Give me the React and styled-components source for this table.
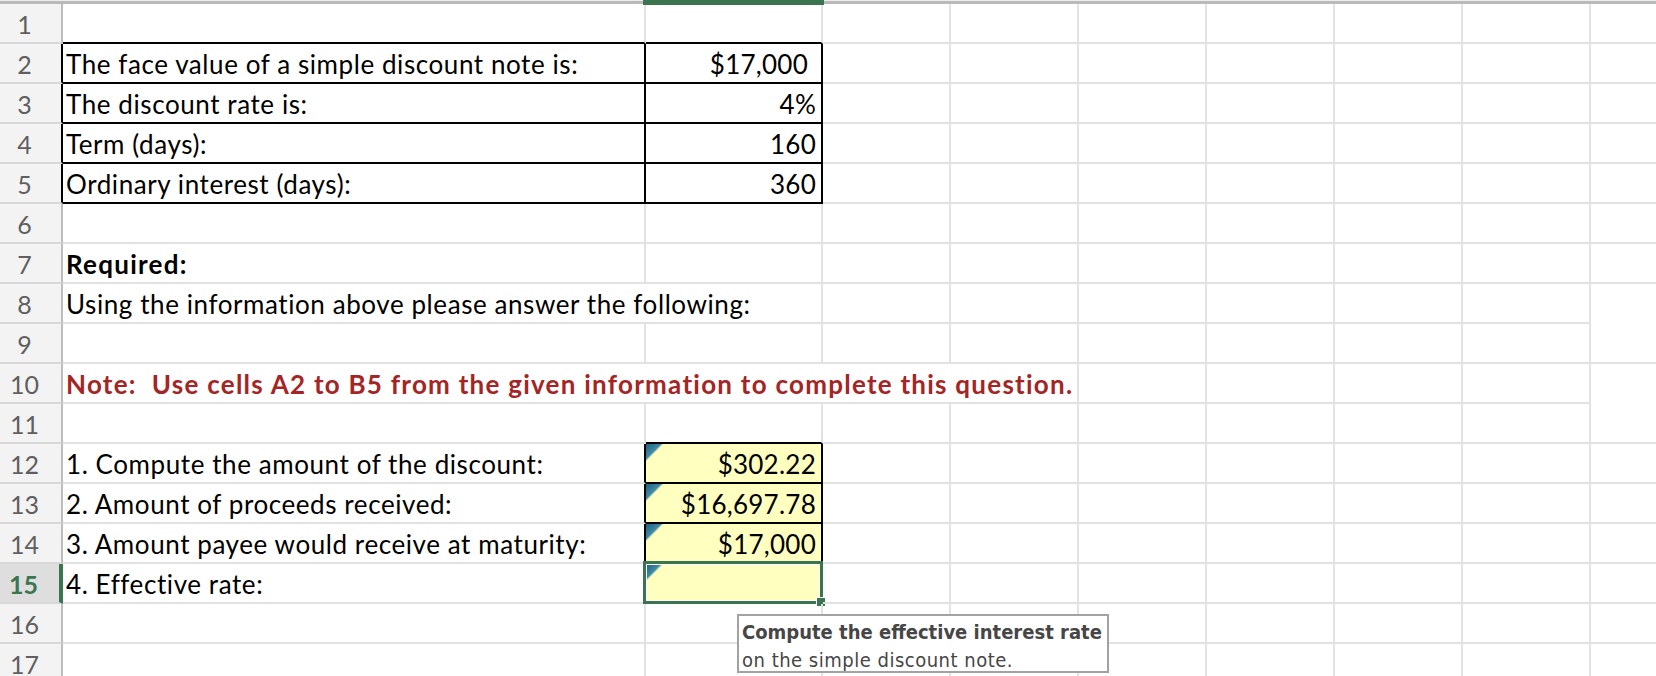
import React from "react";
import styled, { createGlobalStyle } from "styled-components";

const GRID = "#e2e2e2";
const HEAD_LINE = "#d8d8d8";
const HEAD_EDGE = "#bcbcbc";
const INK = "#000";
const GREEN = "#3a7550";
const YELLOW = "#ffffc0";
const RED = "#a52424";

const COLS = "63px 583px 177px repeat(7, 128px)";

const GlobalStyle = createGlobalStyle`
  html, body {
    margin: 0;
    padding: 0;
    background: #fff;
  }
`;

const Sheet = styled.div`
  position: relative;
  width: 1656px;
  height: 676px;
  overflow: hidden;
  background: #fff;
  font-family: Lato, "Open Sans", sans-serif;
  color: #000;
`;

const TopStrip = styled.div`
  display: grid;
  grid-template-columns: ${COLS};
  height: 4px;
  box-sizing: border-box;
  border-top: 1px solid #ececec;
  background: #bababa;
`;

const ColMark = styled.div`
  grid-column: 3;
  margin: -1px -1px 0 -3px;
  height: 5px;
  background: ${GREEN};
  position: relative;
  z-index: 2;
`;

const Row = styled.div`
  display: grid;
  grid-template-columns: ${COLS};
  height: 40px;
`;

const RowHead = styled.div`
  box-sizing: border-box;
  background: ${(p) => (p.$active ? "#dedede" : "#f3f3f3")};
  border-right: ${(p) => (p.$active ? 4 : 2)}px solid ${(p) => p.$edge};
  border-bottom: 2px solid ${HEAD_LINE};
  color: ${(p) => (p.$active ? GREEN : "#5f5f5f")};
  font-weight: ${(p) => (p.$active ? 700 : 400)};
  font-size: 25px;
  line-height: 36px;
  padding: 2px 12px 0 0;
  text-align: center;
`;

const Cell = styled.div`
  position: relative;
  box-sizing: border-box;
  grid-column: span ${(p) => p.$span || 1};
  border-right: 2px solid ${(p) => p.$r || GRID};
  border-bottom: 2px solid ${(p) => p.$b || GRID};
  background-color: ${(p) => p.$fill || "transparent"};
  background-image: ${(p) =>
    p.$note
      ? "linear-gradient(135deg, #225f7b 0px, #3e8ba7 10.5px, rgba(255,255,192,0) 12.5px)"
      : "none"};
  background-size: 17px 17px;
  background-repeat: no-repeat;
  font-size: 26px;
  letter-spacing: ${(p) => (p.$bold ? 1.25 : p.$right ? 0.25 : 0.58)}px;
  line-height: 36px;
  padding: 2px ${(p) => (p.$acct ? 13 : 5)}px 0 3px;
  text-align: ${(p) => (p.$right ? "right" : "left")};
  font-weight: ${(p) => (p.$bold ? 700 : 400)};
  color: ${(p) => p.$color || "#000"};
  white-space: pre;
`;

const Selection = styled.div`
  position: absolute;
  top: -3px;
  left: -3px;
  right: -2px;
  bottom: -2px;
  border: 3px solid ${GREEN};
  box-shadow: inset 0 0 0 1px #fff;
  pointer-events: none;
`;

const FillHandle = styled.div`
  position: absolute;
  right: -6px;
  bottom: -6px;
  width: 8px;
  height: 8px;
  background: ${GREEN};
  border: 1px solid #fff;
`;

const Tip = styled.div`
  position: absolute;
  left: 737px;
  top: 614px;
  width: 372px;
  height: 59px;
  box-sizing: border-box;
  border: 2px solid #a2a2a2;
  background: #fff;
  color: #464646;
  font-family: "DejaVu Sans Condensed", "DejaVu Sans", sans-serif;
  font-size: 20px;
  line-height: 28px;
  padding: 2px 0 0 3px;
  white-space: nowrap;
  overflow: hidden;
`;

const TipTitle = styled.div`
  font-weight: 700;
`;

const TipBody = styled.div`
  letter-spacing: 0.5px;
`;

const rows = [
  { n: 1 },
  { n: 2, a: "The face value of a simple discount note is:", b: "$17,000", acct: true },
  { n: 3, a: "The discount rate is:", b: "4%" },
  { n: 4, a: "Term (days):", b: "160" },
  { n: 5, a: "Ordinary interest (days):", b: "360" },
  { n: 6 },
  { n: 7, a: "Required:", bold: true },
  { n: 8, a: "Using the information above please answer the following:", span: 2 },
  { n: 9 },
  {
    n: 10,
    a: "Note:  Use cells A2 to B5 from the given information to complete this question.",
    bold: true,
    color: RED,
    span: 4,
  },
  { n: 11 },
  { n: 12, a: "1. Compute the amount of the discount:", b: "$302.22", answer: true },
  { n: 13, a: "2. Amount of proceeds received:", b: "$16,697.78", answer: true },
  { n: 14, a: "3. Amount payee would receive at maturity:", b: "$17,000", answer: true },
  { n: 15, a: "4. Effective rate:", b: "", answer: true, active: true },
  { n: 16 },
  { n: 17 },
];

const boxedGiven = (n) => n >= 2 && n <= 5;
const boxedAnswer = (n) => n >= 12 && n <= 14;

function SheetRow({ row }) {
  const { n } = row;
  const edge = row.active ? GREEN : boxedGiven(n) ? INK : HEAD_EDGE;
  const span = row.span || 1;

  const aRight = boxedGiven(n) || boxedAnswer(n) ? INK : undefined;
  const aBottom = boxedGiven(n) || n === 1 ? INK : undefined;
  const bRight = boxedGiven(n) || boxedAnswer(n) ? INK : undefined;
  const bBottom = boxedGiven(n) || boxedAnswer(n) || n === 1 || n === 11 ? INK : undefined;

  const rest = 8 - span;

  return (
    <Row>
      <RowHead $edge={edge} $active={row.active}>
        {n}
      </RowHead>
      <Cell
        $span={span}
        $r={aRight}
        $b={aBottom}
        $bold={row.bold}
        $color={row.color}
      >
        {row.a || ""}
      </Cell>
      {span === 1 && (
        <Cell
          $right
          $acct={row.acct}
          $r={bRight}
          $b={bBottom}
          $fill={row.answer ? YELLOW : undefined}
          $note={row.answer}
        >
          {row.b || ""}
          {row.active && (
            <Selection>
              <FillHandle />
            </Selection>
          )}
        </Cell>
      )}
      {Array.from({ length: rest }).map((_, i) => (
        <Cell key={i} />
      ))}
    </Row>
  );
}

export default function App() {
  return (
    <>
      <GlobalStyle />
      <Sheet>
        <TopStrip>
          <ColMark />
        </TopStrip>
        {rows.map((row) => (
          <SheetRow key={row.n} row={row} />
        ))}
        <Tip>
          <TipTitle>Compute the effective interest rate</TipTitle>
          <TipBody>on the simple discount note.</TipBody>
        </Tip>
      </Sheet>
    </>
  );
}
